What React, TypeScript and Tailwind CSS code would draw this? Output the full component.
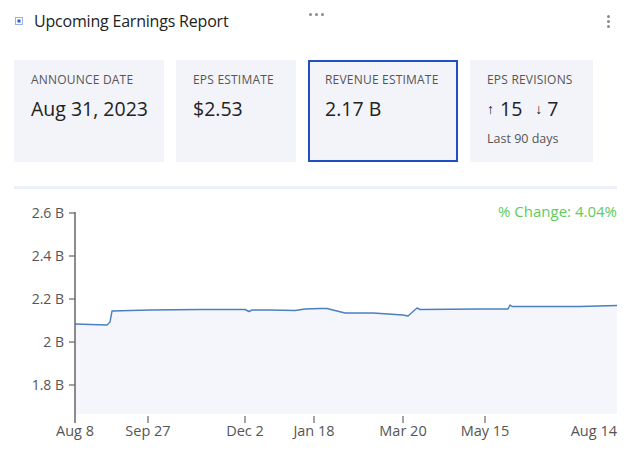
import React from "react";

const font = { fontFamily: '"Open Sans", "Liberation Sans", sans-serif' };

const cards = [
  { label: "ANNOUNCE DATE", value: "Aug 31, 2023", width: "w-[150px]" },
  { label: "EPS ESTIMATE", value: "$2.53", width: "w-[120px]" },
  { label: "REVENUE ESTIMATE", value: "2.17 B", width: "w-[150px]", active: true },
];

const yTicks = [
  { label: "2.6 B", y: 214 },
  { label: "2.4 B", y: 257 },
  { label: "2.2 B", y: 300 },
  { label: "2 B", y: 343 },
  { label: "1.8 B", y: 386 },
];

const xTicks = [
  { label: "Aug 8", x: 75 },
  { label: "Sep 27", x: 148 },
  { label: "Dec 2", x: 245 },
  { label: "Jan 18", x: 314 },
  { label: "Mar 20", x: 403 },
  { label: "May 15", x: 485 },
];

const line =
  "M75,325 L107,326 L110,323 L112,312 L150,311 L200,310.5 L245,310.5 L249,312.5 L252,311 L270,311 L295,311.5 L305,310 L320,309.5 L327,309.5 L345,314 L373,314 L403,316 L408,317 L417,309 L420,310.5 L480,310 L508,310 L510,306 L512,307.5 L580,307.5 L617,306.5";

function Chart() {
  return (
    <svg width={640} height={264} viewBox="0 190 640 264" className="block" style={font}>
      <path d={`${line} L617,415 L75,415 Z`} fill="#f5f6fc" />
      <path d={line} fill="none" stroke="#4a80c0" strokeWidth={1.4} strokeLinejoin="round" />
      <line x1={75} y1={213} x2={75} y2={424} stroke="#666" strokeWidth={1.5} />
      {yTicks.map((t) => (
        <g key={t.label}>
          <line x1={69} y1={t.y} x2={75} y2={t.y} stroke="#666" strokeWidth={1.2} />
          <text x={64} y={t.y + 5} textAnchor="end" fontSize={14} fill="#555">
            {t.label}
          </text>
        </g>
      ))}
      {xTicks.map((t) => (
        <g key={t.label}>
          {t.x !== 75 && <line x1={t.x} y1={417} x2={t.x} y2={424} stroke="#666" strokeWidth={1.2} />}
          <text x={t.x} y={437} textAnchor="middle" fontSize={14.5} fill="#555">
            {t.label}
          </text>
        </g>
      ))}
      <text x={617} y={437} textAnchor="end" fontSize={14.5} fill="#555">
        Aug 14
      </text>
      <text x={617} y={218} textAnchor="end" fontSize={15} fill="#5dcb5d">
        % Change: 4.04%
      </text>
    </svg>
  );
}

export default function App() {
  return (
    <div className="w-[640px] h-[454px] bg-white overflow-hidden text-[#222]" style={font}>
      <header className="relative flex items-center h-[42px] pl-[15px]">
        <svg width={8} height={8} viewBox="0 0 8 8" className="mr-[11px]">
          <rect x={0.5} y={0.5} width={7} height={7} fill="#fff" stroke="#9bb0e8" />
          <rect x={2.5} y={2.5} width={3} height={3} fill="#2a5bd0" />
        </svg>
        <h1 className="text-[16px] tracking-[-0.2px] font-normal leading-none">Upcoming Earnings Report</h1>
        <div className="absolute left-[309px] top-[13px] flex gap-[3px]">
          <span className="w-[3px] h-[3px] rounded-full bg-[#8a8a8a]" />
          <span className="w-[3px] h-[3px] rounded-full bg-[#8a8a8a]" />
          <span className="w-[3px] h-[3px] rounded-full bg-[#8a8a8a]" />
        </div>
        <div className="absolute left-[607px] top-[15px] flex flex-col gap-[2px]">
          <span className="w-[3px] h-[3px] rounded-full bg-[#8a8a8a]" />
          <span className="w-[3px] h-[3px] rounded-full bg-[#8a8a8a]" />
          <span className="w-[3px] h-[3px] rounded-full bg-[#8a8a8a]" />
        </div>
      </header>

      <div className="flex gap-[12px] px-[14px] mt-[18px]">
        {cards.map((c) => (
          <div
            key={c.label}
            className={`${c.width} h-[102px] bg-[#f3f4fa] ${
              c.active ? "border-2 border-[#1f4fc1] pl-[15px] pt-[11px]" : "pl-[17px] pt-[13px]"
            }`}
          >
            <div className="text-[12px] tracking-[0.2px] text-[#555] leading-[14px]">{c.label}</div>
            <div className="text-[19.5px] leading-[24px] mt-[10px]">{c.value}</div>
          </div>
        ))}
        <div className="w-[123px] h-[102px] bg-[#f3f4fa] pl-[17px] pt-[13px]">
          <div className="text-[12px] tracking-[0.2px] text-[#555] leading-[14px]">EPS REVISIONS</div>
          <div className="flex items-center mt-[10px] text-[19.5px] leading-[24px]">
            <span className="text-[14px] mr-[6px]">↑</span>
            <span>15</span>
            <span className="text-[14px] ml-[13px] mr-[5px]">↓</span>
            <span>7</span>
          </div>
          <div className="text-[12.5px] text-[#555] mt-[9px]">Last 90 days</div>
        </div>
      </div>

      <div className="mx-[14px] mt-[24px] h-[3px] bg-[#eef0f9] w-[603px]" />

      <Chart />
    </div>
  );
}
